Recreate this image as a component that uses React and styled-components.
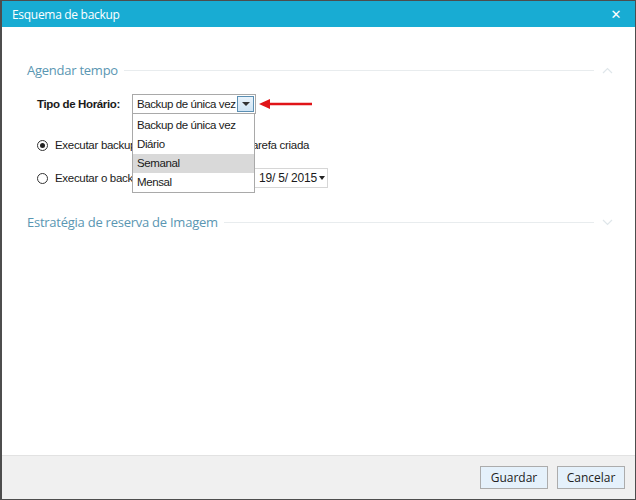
import React from "react";
import styled, { createGlobalStyle } from "styled-components";

const Global = createGlobalStyle`
  html, body { margin: 0; padding: 0; background: #fff; }
  body { font-family: "DejaVu Sans", "Liberation Sans", sans-serif; }
`;

const Window = styled.div`
  width: 636px;
  height: 500px;
  box-sizing: border-box;
  border: 1px solid #4d4d4d;
  border-left-width: 2px;
  display: flex;
  flex-direction: column;
  background: #fff;
  overflow: hidden;
`;

const TitleBar = styled.div`
  height: 26px;
  flex: none;
  background: #18acd3;
  color: #fff;
  display: flex;
  align-items: center;
  justify-content: space-between;
  padding: 0 14px 0 10px;
  font-family: "Open Sans", sans-serif;
  font-size: 12px;
  letter-spacing: -0.3px;
`;

const Close = styled.span`
  font-family: "DejaVu Sans", sans-serif;
  font-size: 13px;
  font-weight: bold;
`;

const Content = styled.div`
  flex: 1;
  padding: 33px 22px 0 25px;
`;

const SectionHeader = styled.div`
  display: flex;
  align-items: center;
  height: 20px;
  gap: 6px;
  margin-top: ${({ $top }) => $top || 0}px;
`;

const SectionTitle = styled.span`
  font-family: "Open Sans", sans-serif;
  font-size: 13px;
  color: #5a96b2;
  letter-spacing: -0.25px;
  white-space: nowrap;
`;

const Rule = styled.div`
  flex: 1;
  height: 1px;
  background: #e8ecee;
`;

const Chevron = styled.svg`
  width: 11px;
  height: 7px;
  margin-left: 2px;
`;

const Body = styled.div`
  padding-left: 10px;
  font-family: "Liberation Sans", Arial, sans-serif;
  font-size: 11.5px;
  letter-spacing: -0.4px;
  color: #1a1a1a;
`;

const Row = styled.div`
  display: flex;
  align-items: center;
  height: 20px;
  margin-top: ${({ $top }) => $top}px;
  white-space: nowrap;
`;

const Label = styled.span`
  font-weight: bold;
  font-size: 11.5px;
  letter-spacing: -0.35px;
  width: 95px;
`;

const SelectWrap = styled.div`
  position: relative;
  width: 124px;
  height: 20px;
  box-sizing: border-box;
  border: 1px solid #a9a9a9;
  display: flex;
  align-items: center;
  padding-left: 4px;
  background: #fff;
`;

const SelectText = styled.span`
  flex: 1;
  overflow: hidden;
`;

const DropButton = styled.span`
  width: 17px;
  height: 16px;
  margin-right: 1px;
  box-sizing: border-box;
  border: 1px solid #5b8fb3;
  background: linear-gradient(#e9f3fb, #cfe4f4);
  display: flex;
  align-items: center;
  justify-content: center;
`;

const Tri = styled.span`
  width: 0;
  height: 0;
  border-left: 4px solid transparent;
  border-right: 4px solid transparent;
  border-top: 4px solid #333;
`;

const List = styled.ul`
  position: absolute;
  left: -1px;
  top: 18px;
  width: 123px;
  box-sizing: border-box;
  margin: 0;
  padding: 2px 0 0 0;
  list-style: none;
  background: #fff;
  border: 1px solid #a9a9a9;
  z-index: 2;
`;

const Item = styled.li`
  height: 19px;
  line-height: 19px;
  padding-left: 4px;
  background: ${({ $active }) => ($active ? "#d9d9d9" : "#fff")};
`;

const Arrow = styled.svg`
  width: 54px;
  height: 12px;
  margin-left: 2px;
`;

const Radio = styled.span`
  width: 11px;
  height: 11px;
  box-sizing: border-box;
  border-radius: 50%;
  border: 1px solid #333;
  margin-right: 7px;
  display: flex;
  align-items: center;
  justify-content: center;
  &::after {
    content: "";
    width: 5px;
    height: 5px;
    border-radius: 50%;
    background: ${({ $checked }) => ($checked ? "#222" : "transparent")};
  }
`;

const RadioText = styled.span`
  width: ${({ $width }) => ($width ? `${$width}px` : "auto")};
  letter-spacing: -0.3px;
`;

const DateBox = styled.span`
  display: inline-flex;
  align-items: center;
  height: 20px;
  box-sizing: border-box;
  border: 1px solid #d6d6d6;
  padding: 0 2px 0 4px;
  gap: 2px;
  font-size: 12px;
  letter-spacing: -0.2px;
`;

const SmallTri = styled.span`
  width: 0;
  height: 0;
  border-left: 3px solid transparent;
  border-right: 3px solid transparent;
  border-top: 4px solid #222;
`;

const Footer = styled.div`
  height: 43px;
  flex: none;
  background: #f0f0f0;
  border-top: 1px solid #e2e2e2;
  display: flex;
  align-items: center;
  justify-content: flex-end;
  gap: 9px;
  padding-right: 10px;
`;

const Button = styled.button`
  width: 68px;
  height: 23px;
  border: 1px solid #acacac;
  background: #e5f1fb;
  font-family: "Open Sans", sans-serif;
  font-size: 12px;
  color: #222;
  padding: 0;
`;

const options = ["Backup de única vez", "Diário", "Semanal", "Mensal"];

export default function App() {
  return (
    <Window>
      <Global />
      <TitleBar>
        <span>Esquema de backup</span>
        <Close>✕</Close>
      </TitleBar>
      <Content>
        <SectionHeader>
          <SectionTitle>Agendar tempo</SectionTitle>
          <Rule />
          <Chevron viewBox="0 0 11 7">
            <path d="M1 6 L5.5 1.5 L10 6" fill="none" stroke="#dfe6ea" strokeWidth="1.2" />
          </Chevron>
        </SectionHeader>
        <Body>
          <Row $top={14}>
            <Label>Tipo de Horário:</Label>
            <SelectWrap>
              <SelectText>Backup de única vez</SelectText>
              <DropButton>
                <Tri />
              </DropButton>
              <List>
                {options.map((o) => (
                  <Item key={o} $active={o === "Semanal"}>
                    {o}
                  </Item>
                ))}
              </List>
            </SelectWrap>
            <Arrow viewBox="0 0 54 12">
              <path d="M11 6 H54" stroke="#e01418" strokeWidth="2.4" />
              <path d="M1 6 L12 1 L12 11 Z" fill="#e01418" />
            </Arrow>
          </Row>
          <Row $top={21}>
            <Radio $checked />
            <RadioText>Executar backup imediatamente após a tarefa criada</RadioText>
          </Row>
          <Row $top={13}>
            <Radio />
            <RadioText $width={199}>Executar o backup uma vez em:</RadioText>
            <DateBox>
              19/ 5/ 2015
              <SmallTri />
            </DateBox>
          </Row>
        </Body>
        <SectionHeader $top={24}>
          <SectionTitle>Estratégia de reserva de Imagem</SectionTitle>
          <Rule />
          <Chevron viewBox="0 0 11 7">
            <path d="M1 1 L5.5 5.5 L10 1" fill="none" stroke="#dfe6ea" strokeWidth="1.2" />
          </Chevron>
        </SectionHeader>
      </Content>
      <Footer>
        <Button>Guardar</Button>
        <Button>Cancelar</Button>
      </Footer>
    </Window>
  );
}
